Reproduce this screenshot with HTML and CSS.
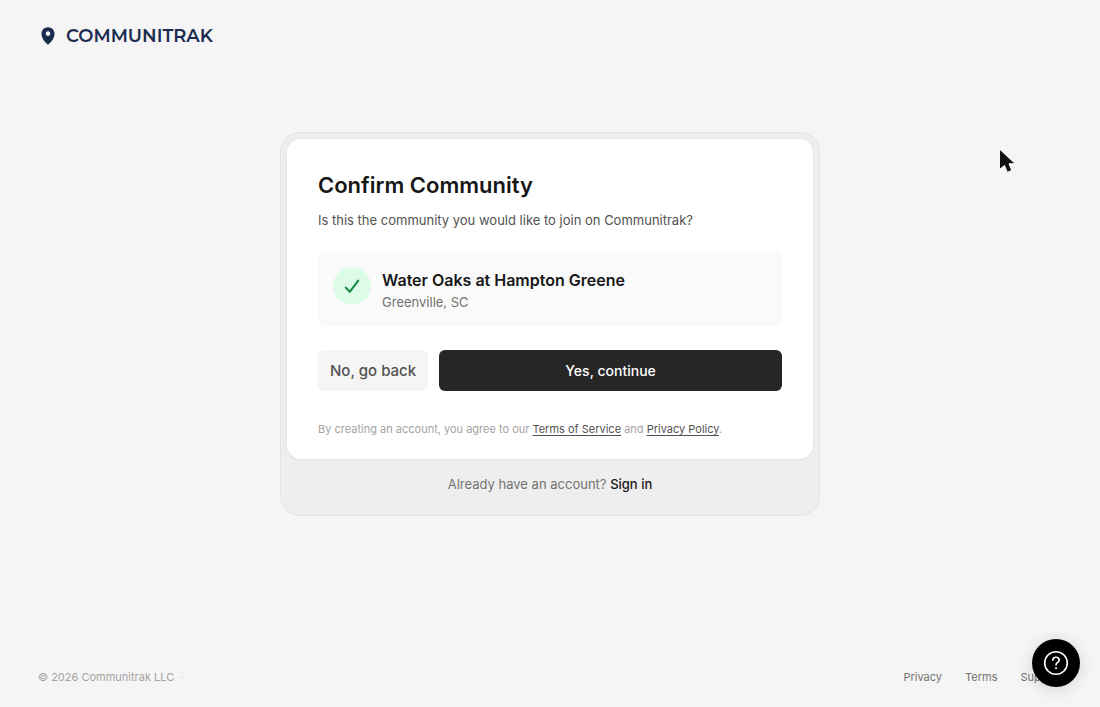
FILE: index.html
```html
<!DOCTYPE html>
<html lang="en">
<head>
<meta charset="utf-8">
<meta name="viewport" content="width=device-width, initial-scale=1">
<title>Confirm Community</title>
<link rel="stylesheet" href="styles.css">
</head>
<body>
<div class="page">
  <header class="header">
    <a class="brand" href="#">
      <svg class="brand-pin" viewBox="0 0 14 18" aria-hidden="true"><path fill="currentColor" fill-rule="evenodd" d="M7 0.3C3.2 0.3 0.5 3.1 0.5 6.7C0.5 11.2 4.2 15.6 7 17.7C9.8 15.6 13.5 11.2 13.5 6.7C13.5 3.1 10.8 0.3 7 0.3ZM7 4.3A2.3 2.3 0 1 1 7 8.9A2.3 2.3 0 0 1 7 4.3Z"/></svg>
      <span class="brand-name">COMMUNITRAK</span>
    </a>
  </header>
  <main class="main">
    <section class="shell">
      <div class="card">
        <h1 class="title">Confirm Community</h1>
        <p class="lead">Is this the community you would like to join on Communitrak?</p>
        <div class="community">
          <span class="badge">
            <svg class="badge-check" viewBox="0 0 20 20" aria-hidden="true"><path d="M3.8 11.6L7.8 15.8L16.2 4.6" fill="none" stroke="currentColor" stroke-width="2" stroke-linecap="round" stroke-linejoin="round"/></svg>
          </span>
          <div>
            <h2 class="community-name">Water Oaks at Hampton Greene</h2>
            <p class="community-place">Greenville, SC</p>
          </div>
        </div>
        <div class="actions">
          <button class="button button-back" type="button">No, go back</button>
          <button class="button button-next" type="button">Yes, continue</button>
        </div>
        <p class="legal">By creating an account, you agree to our <a href="#">Terms of Service</a> and <a href="#">Privacy Policy</a>.</p>
      </div>
      <p class="signin">Already have an account? <a href="#">Sign in</a></p>
    </section>
  </main>
  <footer class="footer">
    <p class="copyright">© 2026 Communitrak LLC <span class="dot">·</span></p>
    <nav class="links">
      <a href="#">Privacy</a>
      <a href="#">Terms</a>
      <a href="#">Support</a>
    </nav>
  </footer>
</div>
<button class="help" type="button" aria-label="Help">
  <svg class="help-icon" viewBox="0 0 26 26" fill="none" stroke="currentColor" stroke-width="1.6" stroke-linecap="round" stroke-linejoin="round" aria-hidden="true"><circle cx="13" cy="13" r="11.3"/><path d="M9.8 10.3C9.8 8.4 11.2 7.3 13 7.3S16.2 8.5 16.2 10.2C16.2 12.4 13 12.4 13 15"/><circle cx="13" cy="18.2" r="0.6" fill="currentColor" stroke-width="1"/></svg>
</button>
<svg class="pointer" viewBox="0 0 20 26" aria-hidden="true"><path d="M1.4 1V21.6L6.5 17.5L9.4 24.4L13.8 22.4L11 15.8H17.4Z" fill="#111" stroke="#fff" stroke-width="1" stroke-linejoin="round"/></svg>
</body>
</html>
```
FILE: styles.css
```css
* {
  box-sizing: border-box;
}

body {
  margin: 0;
  background: #f5f5f5;
  color: #171717;
  font-family: Inter, "Liberation Sans", sans-serif;
  font-size: 13px;
  line-height: 20px;
}

h1,
h2,
p {
  margin: 0;
}

.page {
  display: flex;
  flex-direction: column;
  min-height: 100vh;
}

.header {
  padding: 24px 38px;
}

.brand {
  display: inline-flex;
  align-items: center;
  gap: 11px;
  padding-left: 3px;
  color: #1b2c50;
  text-decoration: none;
}

.brand-pin {
  width: 14px;
  height: 18px;
}

.brand-name {
  font-family: Montserrat, Inter, sans-serif;
  font-size: 18px;
  font-weight: 600;
  line-height: 24px;
}

.main {
  flex: 1;
  display: flex;
  justify-content: center;
  align-items: flex-start;
  padding: 58px 24px;
}

.shell {
  width: 100%;
  max-width: 540px;
  padding: 6px;
  border: 1px solid #e5e5e5;
  border-radius: 20px;
  background: #eeeeee;
}

.card {
  padding: 30px 31px 20px;
  border-radius: 14px;
  background: #fff;
  box-shadow: 0 0 0 1px #e8e8e8, 0 1px 2px rgba(0, 0, 0, 0.08);
}

.title {
  font-size: 22px;
  font-weight: 600;
  line-height: 32px;
}

.lead {
  margin-top: 9px;
  color: #525252;
}

.community {
  display: flex;
  gap: 11px;
  margin-top: 22px;
  padding: 15px;
  border-radius: 6px;
  background: #fafafa;
}

.badge {
  display: flex;
  align-items: center;
  justify-content: center;
  flex: none;
  width: 38px;
  height: 38px;
  border-radius: 50%;
  background: #dcfce7;
  color: #16883f;
}

.badge-check {
  width: 20px;
  height: 20px;
}

.community-name {
  font-size: 16px;
  font-weight: 600;
  line-height: 26px;
}

.community-place {
  color: #737373;
  line-height: 18px;
}

.actions {
  display: flex;
  gap: 11px;
  margin-top: 24px;
}

.button {
  padding: 10px 12px;
  border: 0;
  border-radius: 6px;
  font-family: inherit;
  font-weight: 500;
  line-height: 21px;
}

.button-back {
  background: #f5f5f5;
  color: #525252;
  font-size: 15px;
}

.button-next {
  flex: 1;
  background: #262626;
  color: #fff;
  font-size: 14px;
}

.legal {
  margin-top: 28px;
  color: #a3a3a3;
  font-size: 11px;
}

.legal a {
  color: #525252;
  text-underline-offset: 2px;
}

.signin {
  padding: 15px 0;
  color: #737373;
  text-align: center;
}

.signin a {
  color: #171717;
  font-weight: 500;
  text-decoration: none;
}

.footer {
  display: flex;
  justify-content: space-between;
  padding: 20px 38px;
  font-size: 11px;
}

.copyright {
  color: #a3a3a3;
}

.dot {
  margin-left: 3px;
  color: #d4d4d4;
}

.links {
  display: flex;
  gap: 23px;
}

.links a {
  color: #737373;
  text-decoration: none;
}

.help {
  position: fixed;
  right: 20px;
  bottom: 20px;
  display: flex;
  align-items: center;
  justify-content: center;
  width: 48px;
  height: 48px;
  padding: 0;
  border: 0;
  border-radius: 50%;
  background: #000;
  color: #fff;
  box-shadow: 0 2px 16px rgba(0, 0, 0, 0.14);
}

.help-icon {
  width: 26px;
  height: 26px;
}

.pointer {
  position: fixed;
  top: 148px;
  left: 998px;
  width: 20px;
  height: 26px;
  pointer-events: none;
}
```
